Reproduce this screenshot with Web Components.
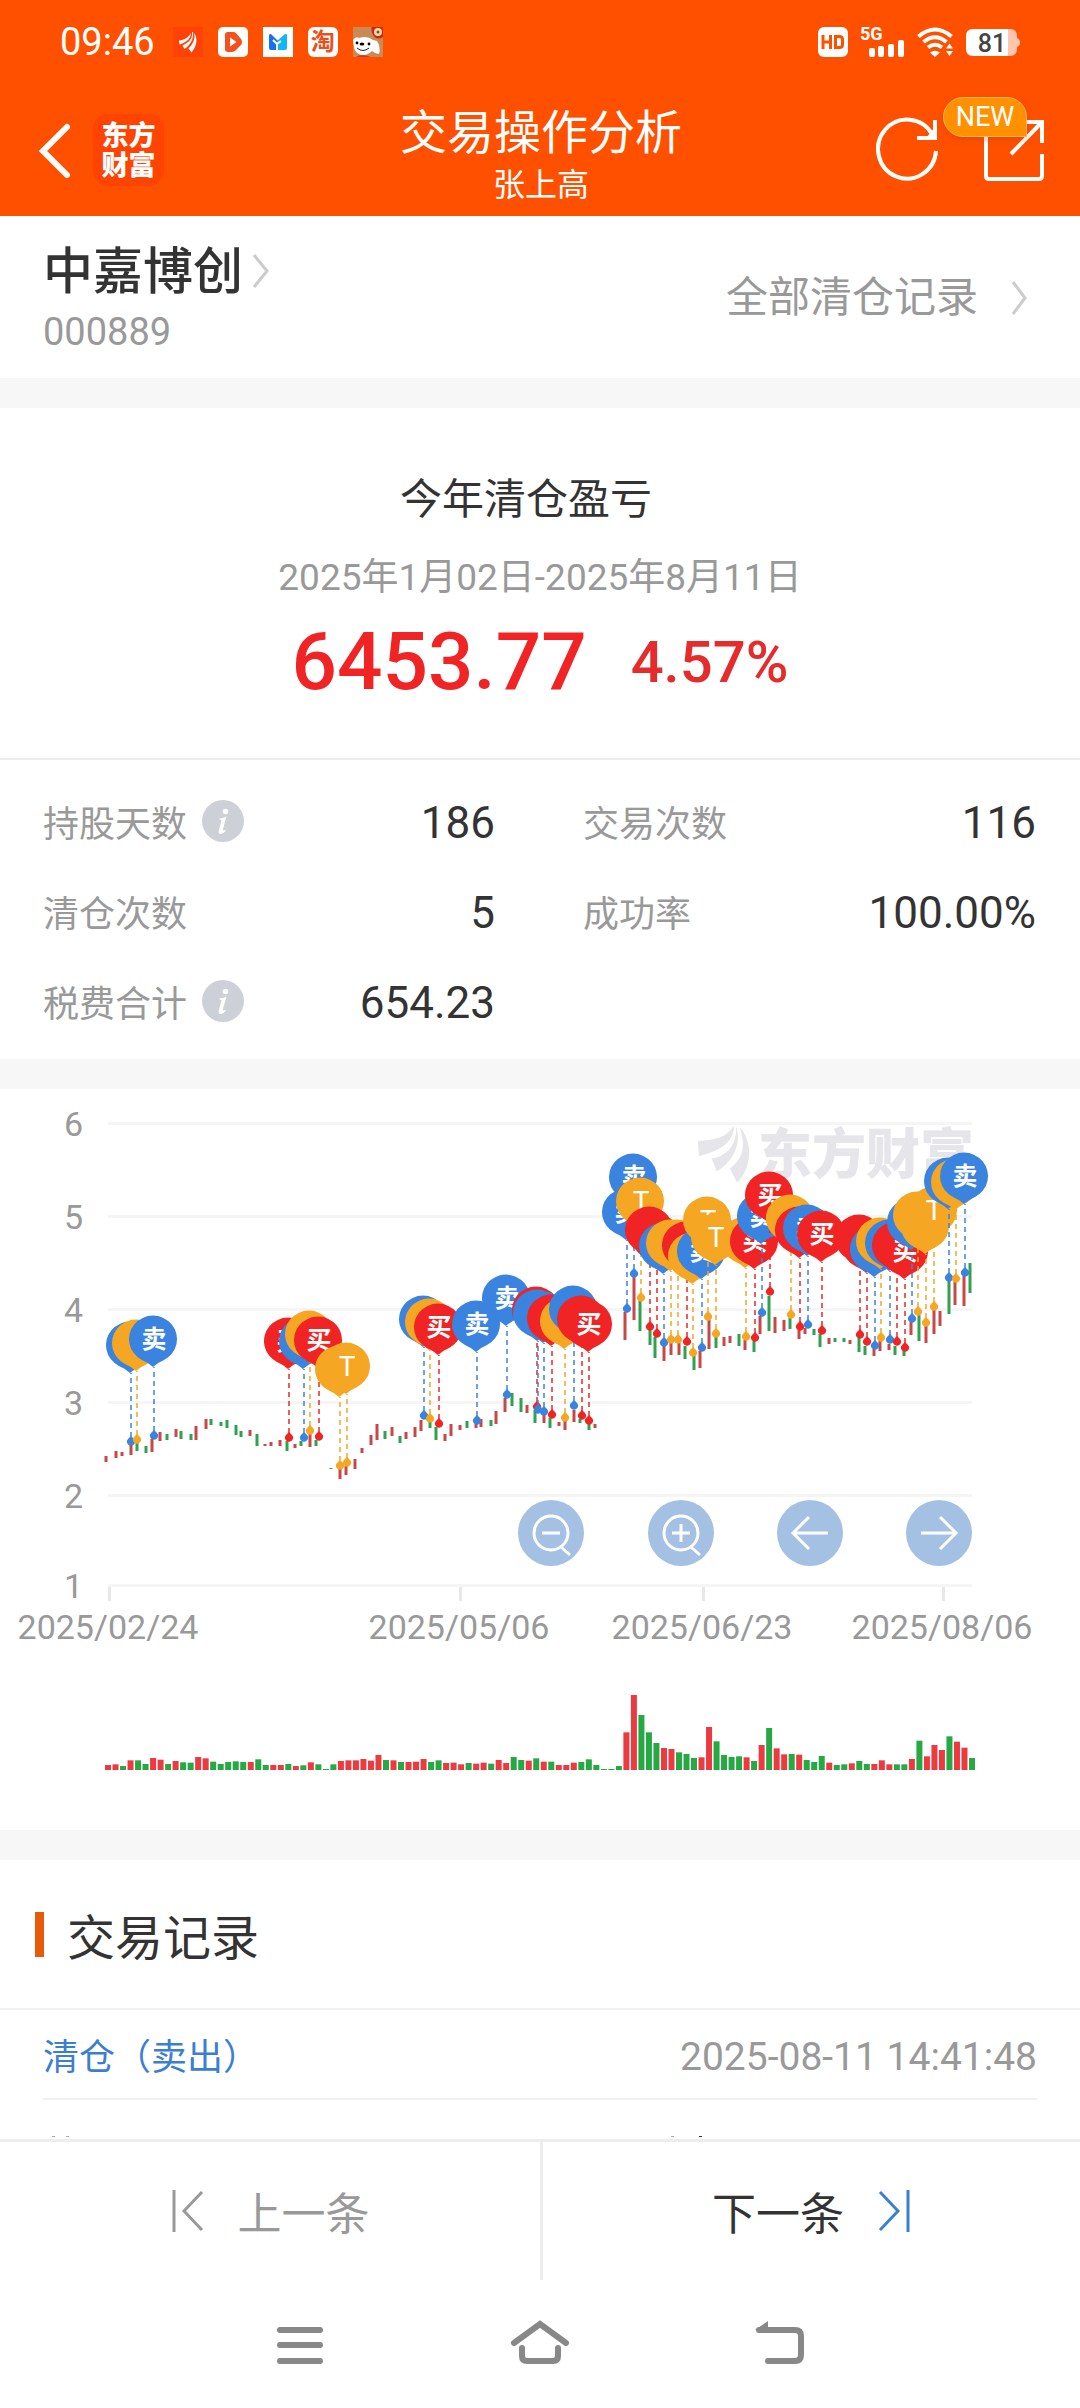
<!DOCTYPE html>
<html lang="zh-CN">
<head>
<meta charset="utf-8">
<meta name="viewport" content="width=device-width, initial-scale=1">
<title>交易操作分析</title>
<style>
  html, body { margin: 0; background: #fff; }
  body { font-family: Roboto, "Noto Sans CJK SC", sans-serif; color: #333; }
</style>
</head>
<body>
<trade-app></trade-app>

<script>
const BASE = `
  *, *::before, *::after { box-sizing: border-box; }
  :host { display: block; }
  svg { display: block; overflow: visible; }
  button { font: inherit; color: inherit; background: none; border: 0; padding: 0; margin: 0; cursor: pointer; }
  a { color: inherit; text-decoration: none; }
  h1, h2, p, dl, dd, dt { margin: 0; font-weight: 400; }
`;
function define(name, html, setup) {
  const tpl = document.createElement('template');
  tpl.innerHTML = html.replace('<style>', '<style>' + BASE);
  customElements.define(name, class extends HTMLElement {
    constructor() {
      super();
      this.attachShadow({ mode: 'open' }).append(tpl.content.cloneNode(true));
    }
    connectedCallback() { if (setup) setup.call(this, this.shadowRoot); }
  });
}

define('status-bar', `
<style>
  :host { display: flex; align-items: center; justify-content: space-between; height: 84px; padding: 0 60px; color: #fff; }
  .side { display: flex; align-items: center; }
  time { font-size: 38px; line-height: 44px; margin-right: 18px; }
  .apps { display: flex; gap: 15px; }
  .tao { width: 30px; height: 30px; border-radius: 6px; background: #fff; color: #e8501c; font-size: 24px; line-height: 30px; font-weight: 700; text-align: center; }
  .sys { gap: 12px; }
  .cell { display: flex; width: 45px; height: 30px; position: relative; }
  .cell b { position: absolute; left: 0; top: -3px; font-size: 18px; line-height: 20px; font-weight: 700; }
</style>
<div class="side">
  <time>09:46</time>
  <div class="apps">
    <svg width="30" height="30" viewBox="0 0 30 30"><rect width="30" height="30" rx="2" fill="#ff4208"/><g fill="#fff"><path d="M6 13.500C11 13 15 11 18 6C18 12 12 16 6.500 17.500Z"/><path d="M19 5C20 12 15 16 9.500 18.500L11.500 22C17 18 21 12 20 5Z"/><path d="M21 6C23 12 19 18 15.500 21.500L18.500 25.500C24 19 25 11 21 6Z"/></g></svg>
    <svg width="30" height="30" viewBox="0 0 30 30"><rect width="30" height="30" rx="5" fill="#fff"/><path d="M10 5h5q2 0 3 1l5 6q2 3 0 6l-5 5q-2 2-4 2h-4q-3 0-3-3V8q0-3 3-3Z" fill="#f4511e"/><path d="M12 10.500v9l6.500-4.500Z" fill="#fff"/></svg>
    <svg width="30" height="30" viewBox="0 0 30 30"><path d="M0 0h30v30H0Z" fill="#fff"/><path d="M6 8q0-1 2-1l7 7v9H8q-2 0-2-2Z" fill="#1b6ff0"/><path d="M24 8q0-1-2-1l-8 7v9h8q2 0 2-2Z" fill="#12b5f5"/><path d="M10 13l4 4v6M14 17l4-3" stroke="#fff" stroke-width="2" fill="none"/></svg>
    <span class="tao">淘</span>
    <svg width="30" height="30" viewBox="0 0 30 30"><rect width="30" height="30" fill="#c98a55"/><path d="M18.500 0H30V10Q26 13 21.500 10Q18 6 18.500 0Z" fill="#c8281e"/><circle cx="25" cy="5" r="4" fill="#ffe2a8"/><circle cx="25" cy="5" r="1.500" fill="#c8281e"/><path d="M0 13Q3 9 6 11Q14 8 20 13L24 14Q28 20 26 27L22 26L19 24Q14 29 8 28Q2 26 1 20Z" fill="#fff"/><circle cx="4" cy="16" r="1.400"/><ellipse cx="9" cy="17" rx="2.400" ry="1.600"/><circle cx="16" cy="17" r="1.400"/><path d="M4 21Q10 26 16 21" stroke="#222" fill="none"/><path d="M3 30Q8 26 18 30Z" fill="#d8342a"/></svg>
  </div>
</div>
<div class="side sys">
  <svg width="30" height="30" viewBox="0 0 30 30"><rect width="30" height="30" rx="6" fill="#fff"/><path d="M5 8v14M12.500 8v14M5 15h7.500" stroke="#ff5000" stroke-width="3" fill="none"/><path d="M17.500 9.500h4q3 0 3 3v5q0 3-3 3h-4Z" stroke="#ff5000" stroke-width="3" fill="none"/></svg>
  <span class="cell"><b>5G</b><svg width="45" height="30" viewBox="0 0 45 30" fill="#fff"><rect x="9" y="21" width="6" height="9" rx="2"/><rect x="18" y="19" width="6" height="11" rx="2"/><rect x="28" y="17" width="6" height="13" rx="2"/><rect x="38" y="13" width="6" height="17" rx="2"/></svg></span>
  <svg width="37" height="30" viewBox="0 0 37 30" fill="none" stroke="#fff" stroke-width="4"><path d="M1.500 9.500Q18 -4.500 34.500 9.500"/><path d="M6.500 15Q18 5.500 29.500 15"/><path d="M11 20.500Q18 15 25 20.500"/><path d="M13 25.500Q18 22 23 25.500L18 30Z" fill="#fff" stroke="none"/><path d="M29 21.500l3.500-5 3.500 5ZM29 24l3.500 5 3.500-5Z" fill="#fff" stroke="none"/></svg>
  <svg width="54" height="30" viewBox="0 0 54 30"><path d="M42 2h2q7 0 7 7v2q3 1 3 4.500t-3 4.500v2q0 7-7 7h-2Z" fill="#ffc6ae"/><path d="M7 2h35v27H7q-7 0-7-7V9q0-7 7-7Z" fill="#fff"/><text x="26" y="25" text-anchor="middle" font-size="25" font-weight="500" fill="#444" font-family="Roboto">81</text></svg>
</div>`);

define('title-bar', `
<style>
  :host { display: grid; grid-template-columns: 1fr auto 1fr; height: 132px; color: #fff; padding: 0 35px 0 37px; }
  .left { display: flex; align-items: center; gap: 20px; }
  .logo { width: 71px; height: 72px; border-radius: 15px; background: #ff4300; font-size: 27px; line-height: 30px; font-weight: 900; text-align: center; padding-top: 7px; }
  .mid { text-align: center; padding-top: 17px; }
  h1 { font-size: 47px; line-height: 64px; }
  p { font-size: 32px; line-height: 40px; }
  .right { display: flex; align-items: center; justify-content: flex-end; gap: 44px; }
  .share { position: relative; }
  .badge { position: absolute; right: 18px; bottom: 45px; height: 40px; width: 84px; border: 1px solid #ffb35c; border-radius: 20px 20px 0 20px; background: #ff9100; font-size: 27px; line-height: 38px; text-align: center; box-shadow: 0 3px 6px rgba(160,60,0,.25); }
</style>
<div class="left">
  <button aria-label="返回"><svg width="36" height="56" viewBox="0 0 36 56"><path d="M30 5L6 29L30 53" fill="none" stroke="#fff" stroke-width="6" stroke-linecap="round"/></svg></button>
  <a class="logo" href="#">东方<br>财富</a>
</div>
<div class="mid"><h1>交易操作分析</h1><p>张上高</p></div>
<div class="right">
  <button aria-label="刷新"><svg width="64" height="64" viewBox="0 0 64 64" fill="none" stroke="#fff" stroke-width="4"><path d="M60 33A29 29.500 0 1 1 56 16"/><path d="M59 2V20H41"/><path d="M59 20V9L50 20Z" fill="#fff" stroke="none"/></svg></button>
  <button class="share" aria-label="分享"><svg width="61" height="64" viewBox="0 0 61 64" fill="none" stroke="#fff" stroke-width="4"><path d="M22 4H6Q2 4 2 7V58Q2 61 5 61H55Q58 61 58 58V36"/><path d="M58 25V4H38M57 5L27 36"/></svg><span class="badge">NEW</span></button>
</div>`);

define('stock-head', `
<style>
  :host { display: flex; justify-content: space-between; align-items: center; height: 162px; padding: 2px 52px 0 43px; }
  .name { display: flex; align-items: center; gap: 9px; font-size: 50px; line-height: 60px; font-weight: 500; }
  .name svg { margin-bottom: 2px; }
  .code { font-size: 38px; line-height: 44px; margin-top: 8px; color: #999; }
  .all { display: flex; align-items: center; gap: 33px; font-size: 42px; line-height: 60px; color: #999; }
</style>
<div><a class="name" href="#"><slot name="name"></slot><svg width="18" height="36" viewBox="0 0 18 36"><path d="M2 2L15 18L2 34" fill="none" stroke="#ccc" stroke-width="3"/></svg></a>
<p class="code"><slot name="code"></slot></p></div>
<a class="all" href="#">全部清仓记录<svg width="17" height="36" viewBox="0 0 17 36"><path d="M2 2L14 18L2 34" fill="none" stroke="#ccc" stroke-width="3"/></svg></a>`);

define('profit-summary', `
<style>
  :host { padding: 62px 0 48px; text-align: center; border-bottom: 2px solid #ededed; }
  h2 { font-size: 42px; line-height: 60px; padding-right: 28px; }
  .range { font-size: 37px; line-height: 48px; margin-top: 24px; color: #999; }
  .sum { display: flex; justify-content: center; align-items: center; gap: 44px; margin-top: 12px; line-height: 96px; font-weight: 500; color: #f02424; }
  .sum b { font-weight: 500; font-size: 80px; }
  .sum span { font-size: 58px; color: #e52b2b; }
</style>
<h2>今年清仓盈亏</h2>
<p class="range">2025年1月02日-2025年8月11日</p>
<div class="sum"><b>6453.77</b><span>4.57%</span></div>`);

define('stat-item', `
<style>
  :host { display: flex; align-items: center; height: 90px; }
  .key { display: flex; align-items: center; gap: 15px; padding-bottom: 5px; }
  .label { font-size: 36px; color: #999; }
  .value { margin-left: auto; font-size: 44px; }
</style>
<span class="key"><span class="label"></span></span><span class="value"><slot></slot></span>`,
function (root) {
  const label = root.querySelector('.label');
  label.textContent = this.getAttribute('label');
  if (this.hasAttribute('info')) {
    const b = document.createElement('button');
    b.setAttribute('aria-label', '说明');
    b.innerHTML = '<svg width="42" height="42" viewBox="0 0 42 42"><circle cx="21" cy="21" r="21" fill="#cdd0d6"/><circle cx="23.500" cy="11.500" r="2.800" fill="#fff"/><path d="M17.500 18.500Q22 18 24.500 16.500L21 29Q20.500 31.500 24.500 29.500Q21.500 34 18.500 34Q16 34 16.800 30.500L19.500 20.500Q19 19.500 17.500 19.500Z" fill="#fff"/></svg>';
    label.after(b);
  }
});

define('stat-grid', `
<style>
  :host { display: grid; grid-template-columns: 452px 1fr; column-gap: 88px; padding: 18px 44px 11px 43px; }
</style>
<slot></slot>`);

define('section-gap', `<style>:host { height: 30px; background: #f7f7f7; }</style>`);

/* Price and volume chart: candles, trade pins and volume bars share one canvas. */
define('trade-chart', `
<style>
  :host { position: relative; }
  .plot { width: 100%; height: auto; }
  .tools { position: absolute; top: 55.500%; right: 10%; width: 42%; display: flex; justify-content: space-between; }
  .tools button { width: 66px; height: 66px; border-radius: 50%; background: #a4c1e3; }
</style>
<svg class="plot" viewBox="0 1089 1080 741" font-family="Roboto, 'Noto Sans CJK SC', sans-serif"></svg>
<div class="tools">
  <button aria-label="缩小"><svg width="66" height="66" viewBox="0 0 66 66" fill="none" stroke="#fff" stroke-width="3"><circle cx="33" cy="33" r="17"/><path d="M24 33h18M43 47l9 8"/></svg></button>
  <button aria-label="放大"><svg width="66" height="66" viewBox="0 0 66 66" fill="none" stroke="#fff" stroke-width="3"><circle cx="33" cy="33" r="17"/><path d="M24 33h18M33 24v18M43 47l9 8"/></svg></button>
  <button aria-label="左移"><svg width="66" height="66" viewBox="0 0 66 66" fill="none" stroke="#fff" stroke-width="3"><path d="M51 33H16M32 17L16 33L32 49"/></svg></button>
  <button aria-label="右移"><svg width="66" height="66" viewBox="0 0 66 66" fill="none" stroke="#fff" stroke-width="3"><path d="M15 33H50M34 17L50 33L34 49"/></svg></button>
</div>`,
function (root) {
  const C = { R: '#c84848', G: '#30a14e' };
  const P = { B: '#3a83df', Y: '#f5a623', R: '#f02424' };
  const T = { B: '卖', Y: 'T', R: '买' };
  // Data is stored on a 2.904 x 3 sub-pixel grid; the second half starts at x = 540.
  const left = `309R1098-1115 336R1083-1103 353R1086-1098 379R1064-1095 397G1058-1082 423G1067-1090 440R1047-1085 466R1026-1053 484G1031-1049 510R1017-1040 527G1022-1046 554G1031-1050 570R1008-1049 597R986-1018 614G986-1004 641G995-1007 658G991-1014 684G1006-1034 701G1022-1040 727R1019-1037 745G1033-1067 771R1062-1067 788R1057-1067 814R1050-1067 832G1052-1082 858R1062-1073 875G1053-1067 901R1033-1071 919G1050-1067 962G1133-1137 988R1136-1167 1006R1128-1154 1032R1106-1137 1050R1073-1090 1076R1036-1064 1094R1003-1049 1119G1022-1046 1137R1012-1039 1163G1039-1058 1180R1026-1046 1206R1012-1040 1224R990-1022 1250G994-1014 1267G1012-1049 1293R1031-1054 1311R1003-1039 1337R1006-1019 1355G992-1013 1381R1000-1015 1397R986-1010 1425G991-1009 1441R964-1003 1467R924-965 1486G908-948 1512G925-965 1529R944-970 1555G960-998`;
  const right = `13R973-998 30G983-1013 56R996-1007 74R990-1019 100R959-995 117G987-998 143G1002-1021 161R1003-1015 248R667-749 274R560-689 291G632-723 318G720-765 335G741-804 361R768-812 379R759-794 405R758-794 422G767-807 448G797-840 466R783-834 492R689-776 510G741-773 535R741-768 553R739-759 579G732-768 596R750-779 622G752-785 640R678-731 666G617-723 683R681-729 710R690-723 727G683-717 753R720-746 771R714-732 797G718-735 814G733-770 840R744-762 858G744-756 884G744-756 901R750-762 927G744-785 945G767-794 971R778-798 988R753-783 1014R762-779 1032G767-794 1058G783-798 1076R697-735 1102G675-753 1120R709-759 1145R660-731 1163R663-708 1189G572-671 1206R575-644 1232R557-648 1250G519-609`;
  // A trailing * marks the pins whose label is not buried under the next pins.
  const pinsL = '380B1052 399Y1047 446B1035* 839R1041* 882B1041 900Y1021 926R1038* 988Y1124 1009Y1115* 1231B976 1249Y983 1275R999* 1384B990* 1471B913* 1558R949';
  const pinsR = '-5B957 13B963 35R971 74Y980 100B946 122R974 143R990* 252B655* 274B549* 292Y622* 318R707 340R730 361B755 379Y746 402Y746 428R754 445Y785 471B771* 488Y677* 510Y730* 597Y738 623R741* 646B665* 667R604* 728Y671 754R707 777B702* 820R720* 929R732 951R754 973B766 990Y741 1016B748 1038R754 1060R771* 1081B685 1099Y663 1121Y696 1143Y649* 1189B560 1209Y563 1234B546*';
  const vol = 'R825 R823 G828 R811 G811 G822 R804 R809 G822 R813 G817 G818 R801 R805 G815 G822 G816 G814 G816 R816 G808 G825 R825 R825 G822 R828 G826 R817 G823 G837 G823 R813 R811 R811 R807 R812 R795 G810 R811 G816 R816 R815 R807 G816 G811 R819 R818 R823 G819 R821 R818 G821 R810 R819 G801 G810 R812 G805 R815 G815 R825 R825 R818 G816 G808 G825 G837 G837 G828 R727 R615 G675 G727 G759 R774 R777 G787 G792 G804 R802 R711 G754 G795 G801 G799 R802 G813 R765 G714 R775 R793 G792 R794 G810 G816 G798 R818 G825 G823 R820 G813 G822 R822 R811 R823 G823 G823 R807 G752 R799 R765 R780 G739 R755 R773 G804'.split(' ');
  const X = (v, off) => Math.round(off + v / 2.904), Y = v => Math.round(1090 + v / 3);
  let s = '';
  [1123, 1216, 1309, 1402, 1495, 1585].forEach((y, i) => {
    s += `<path d="M108 ${y + .5}H972" stroke="#f5f5f5" stroke-width="3"/><text x="83" y="${y + 13}" text-anchor="end" font-size="34" fill="#999">${6 - i}</text>`;
  });
  [['2025/02/24', 109], ['2025/05/06', 460], ['2025/06/23', 703], ['2025/08/06', 943]].forEach(([t, x]) => {
    s += `<path d="M${x + .5} 1587V1601" stroke="#e8e8e8" stroke-width="3"/><text x="${x - 1}" y="1639" text-anchor="middle" font-size="34" fill="#999">${t}</text>`;
  });
  s += `<g fill="#e5e5ea" transform="translate(540 1090) scale(.344 .333)"><path d="M459 153C505 150 540 145 563 108C567 160 512 186 462 198Z"/><path d="M570 108C573 165 545 197 499 206L514 245C556 217 588 170 570 108Z"/><path d="M580 110C600 170 590 205 552 236L573 278C618 232 619 155 580 110Z"/></g><text x="758" y="1174" font-size="54" font-weight="900" fill="#e5e5ea">东方财富</text>`;
  const candles = (str, off) => str.split(' ').forEach(c => {
    const m = c.match(/^(\d+)([RG])(\d+)-(\d+)$/);
    s += `<rect x="${X(+m[1], off) - 1.5}" y="${Y(+m[3])}" width="3" height="${Math.max(1, Y(+m[4]) - Y(+m[3]))}" fill="${C[m[2]]}"/>`;
  });
  candles(left, 0); candles(right, 540);
  const pins = (str, off) => str.split(' ').forEach(c => {
    const m = c.match(/^(-?\d+)([BYR])(\d+)(\*?)$/), x = X(+m[1], off), y = Y(+m[3]), h = y - 96, f = P[m[2]], isT = m[2] === 'Y';
    s += `<path d="M${x} ${y - 4}V${h + 28}" stroke="${f}" stroke-width="2" stroke-dasharray="5 4" opacity=".75"/>
      <path d="M${x} ${y - 5}L${x + 3} ${y - 2}A4 4 0 1 1 ${x - 3} ${y - 2}Z" fill="${f}"/>
      <path d="M${x - 1} ${h + 28}Q${x - 5} ${h + 24} ${x - 12} ${h + 21}A24 23.500 0 1 1 ${x + 10} ${h + 21}Q${x + 3} ${h + 24} ${x - 1} ${h + 28}Z" fill="${f}"/>`;
    if (m[4]) s += `<text x="${x}" y="${h + (isT ? 10 : 9)}" text-anchor="middle" font-size="${isT ? 28 : 25}" font-weight="${isT ? 400 : 700}" fill="#fff">${T[m[2]]}</text>`;
  });
  pins(pinsL, 0); pins(pinsR, 540);
  vol.forEach((v, i) => {
    const top = 1490 + (+v.slice(1)) / 3;
    s += `<rect x="${105 + i * 7.513}" y="${top}" width="6" height="${1770 - top}" fill="${v[0] === 'R' ? '#ec3b40' : '#26a844'}"/>`;
  });
  root.querySelector('.plot').innerHTML = s;
});

define('record-list', `
<style>
  :host { flex: 1; overflow: hidden; }
  h2 { display: flex; align-items: center; gap: 23px; height: 150px; padding-left: 35px; font-size: 48px; border-bottom: 2px solid #f0f0f0; }
  h2::before { content: ""; width: 9px; height: 45px; background: #e75a0c; }
  .row { display: flex; justify-content: space-between; align-items: center; height: 90px; margin: 0 43px; border-bottom: 2px solid #f0f0f0; }
  .kind { font-size: 36px; color: #3a7fd0; }
  time { font-size: 39px; color: #999; padding-top: 6px; }
  .more { width: 100%; height: 39px; }
</style>
<h2>交易记录</h2>
<div class="row"><a class="kind" href="#">清仓（卖出）</a><time>2025-08-11 14:41:48</time></div>
<svg class="more" viewBox="0 0 1080 39" aria-hidden="true"><path d="M52 36.500h3M66 36.500h3M671 36.500h3" stroke="#aaa"/><path d="M699 36.500h3" stroke="#333"/></svg>`);

define('pager-bar', `
<style>
  :host { display: grid; grid-template-columns: 1fr 1fr; height: 141px; border-top: 3px solid #ededed; font-size: 44px; }
  button { display: flex; align-items: center; justify-content: center; gap: 33px; }
  .prev { color: #999; }
  .next { color: #333; border-left: 3px solid #ededed; }
</style>
<button class="prev"><svg width="34" height="44" viewBox="0 0 34 44" fill="none" stroke="#999" stroke-width="3"><path d="M3 1V43M31 3L13 22L31 41"/></svg>上一条</button>
<button class="next">下一条<svg width="34" height="44" viewBox="0 0 34 44" fill="none" stroke="#3a7fd0" stroke-width="3"><path d="M31 1V43M3 3L21 22L3 41"/></svg></button>`);

define('system-nav', `
<style>
  :host { display: flex; justify-content: center; align-items: center; gap: 182px; height: 128px; }
</style>
<button aria-label="任务"><svg width="58" height="46" viewBox="0 0 58 46" stroke="#888" stroke-width="6" stroke-linecap="round"><path d="M9 9H49M9 24H49M9 40H49"/></svg></button>
<button aria-label="主页"><svg width="58" height="46" viewBox="0 0 58 46" fill="none" stroke="#888" stroke-width="6" stroke-linecap="round" stroke-linejoin="round"><path d="M3 22L29 3L55 22" stroke-linejoin="miter"/><path d="M11 27V35Q11 40 16 40H42Q47 40 47 35V27"/></svg></button>
<button aria-label="后退"><svg width="58" height="46" viewBox="0 0 58 46" fill="none" stroke="#888" stroke-width="6" stroke-linecap="round"><path d="M8 9H44Q50 9 50 15V34Q50 40 44 40H17"/><path d="M4 9L17 0V10Z" fill="#888" stroke="none"/></svg></button>`);

define('trade-app', `
<style>
  :host { display: flex; flex-direction: column; min-height: 100vh; background: #fff; }
  header { background: #ff5000; }
</style>
<header><status-bar></status-bar><title-bar></title-bar></header>
<stock-head><span slot="name">中嘉博创</span><span slot="code">000889</span></stock-head>
<section-gap></section-gap>
<profit-summary></profit-summary>
<stat-grid>
  <stat-item label="持股天数" info>186</stat-item><stat-item label="交易次数">116</stat-item>
  <stat-item label="清仓次数">5</stat-item><stat-item label="成功率">100.00%</stat-item>
  <stat-item label="税费合计" info>654.23</stat-item>
</stat-grid>
<section-gap></section-gap>
<trade-chart></trade-chart>
<section-gap></section-gap>
<record-list></record-list>
<pager-bar></pager-bar>
<system-nav></system-nav>`);
</script>
</body>
</html>
